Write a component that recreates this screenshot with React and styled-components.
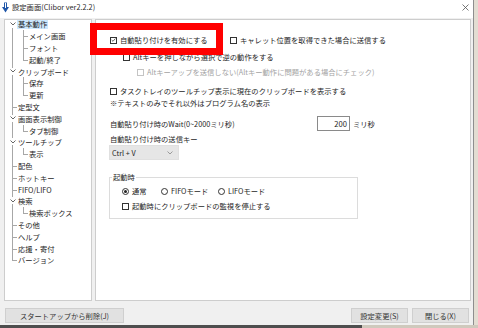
import styled, { createGlobalStyle } from "styled-components";

const GlobalStyle = createGlobalStyle`
  html, body {
    margin: 0;
    padding: 0;
    background: #e3ddd2;
  }
  body {
    font-family: "Noto Sans CJK JP", "Noto Sans", sans-serif;
    font-size: 7.3px;
    color: #1e1e1e;
  }
`;

const TREE = [
  { label: "基本動作", level: 0, expandable: true, selected: true, first: true },
  { label: "メイン画面", level: 1 },
  { label: "フォント", level: 1 },
  { label: "起動/終了", level: 1, lastChild: true },
  { label: "クリップボード", level: 0, expandable: true },
  { label: "保存", level: 1 },
  { label: "更新", level: 1, lastChild: true },
  { label: "定型文", level: 0 },
  { label: "画面表示制御", level: 0, expandable: true },
  { label: "タブ制御", level: 1, lastChild: true },
  { label: "ツールチップ", level: 0, expandable: true },
  { label: "表示", level: 1, lastChild: true },
  { label: "配色", level: 0 },
  { label: "ホットキー", level: 0 },
  { label: "FIFO/LIFO", level: 0 },
  { label: "検索", level: 0, expandable: true },
  { label: "検索ボックス", level: 1, lastChild: true },
  { label: "その他", level: 0 },
  { label: "ヘルプ", level: 0 },
  { label: "応援・寄付", level: 0 },
  { label: "バージョン", level: 0, last: true },
];

function CheckBox({ checked, disabled }) {
  return (
    <Box $disabled={disabled}>
      {checked && (
        <svg width="6" height="6" viewBox="0 0 6 6">
          <polyline points="0.8,3 2.4,4.6 5.3,1.2" fill="none" stroke="#333" strokeWidth="0.9" />
        </svg>
      )}
    </Box>
  );
}

function Check({ label, checked, disabled, width }) {
  return (
    <Item $width={width} $disabled={disabled}>
      <CheckBox checked={checked} disabled={disabled} />
      <span>{label}</span>
    </Item>
  );
}

function Radio({ label, checked, width }) {
  return (
    <Item $width={width}>
      <Circle>{checked && <Dot />}</Circle>
      <span>{label}</span>
    </Item>
  );
}

export default function App() {
  return (
    <>
      <GlobalStyle />
      <Page>
        <Top>
          <Window>
            <TitleBar>
              <svg width="7" height="11" viewBox="0 0 7 11">
                <rect x="2" y="0.5" width="3" height="5" fill="#1f56a8" />
                <polygon points="0,5 7,5 3.5,10.5" fill="#1f56a8" />
                <rect x="3" y="1" width="1" height="5" fill="#fff" />
              </svg>
              <Title>設定画面(Clibor ver2.2.2)</Title>
              <Close>
                <svg width="7" height="7" viewBox="0 0 7 7">
                  <path d="M0.5 0.5 L6.5 6.5 M6.5 0.5 L0.5 6.5" stroke="#555" strokeWidth="0.8" />
                </svg>
              </Close>
            </TitleBar>

            <Body>
              <TreePanel>
                <TreeList>
                  {TREE.map((n, i) => (
                    <TreeRow key={i}>
                      <RootGutter
                        $top={n.first}
                        $bottom={n.level === 0 && n.last}
                        $stub={n.level === 0 && !n.expandable}
                      >
                        {n.expandable && (
                          <Chevron>
                            <svg width="6" height="4" viewBox="0 0 6 4">
                              <polyline points="0.5,0.5 3,3 5.5,0.5" fill="none" stroke="#555" strokeWidth="0.9" />
                            </svg>
                          </Chevron>
                        )}
                      </RootGutter>
                      {n.level === 1 && <ChildGutter $last={n.lastChild} />}
                      <TreeLabel $selected={n.selected}>{n.label}</TreeLabel>
                    </TreeRow>
                  ))}
                </TreeList>
              </TreePanel>

              <ContentPanel>
                <Row $mt={14}>
                  <Check label="自動貼り付けを有効にする" checked width={120} />
                  <Check label="キャレット位置を取得できた場合に送信する" />
                </Row>
                <Row $mt={5} $indent={13}>
                  <Check label="Altキーを押しながら選択で逆の動作をする" />
                </Row>
                <Row $mt={3} $indent={27}>
                  <Check label="Altキーアップを送信しない(Altキー動作に問題がある場合にチェック)" disabled />
                </Row>
                <Row $mt={7}>
                  <Check label="タスクトレイのツールチップ表示に現在のクリップボードを表示する" />
                </Row>
                <Row>
                  <Text>※テキストのみでそれ以外はプログラム名の表示</Text>
                </Row>
                <Row $mt={7} $h={15}>
                  <Text $width={207}>自動貼り付け時のWait(0~2000ミリ秒)</Text>
                  <NumberBox>200</NumberBox>
                  <Unit>ミリ秒</Unit>
                </Row>
                <Row $mt={2}>
                  <Text>自動貼り付け時の送信キー</Text>
                </Row>
                <Combo>
                  <span>Ctrl + V</span>
                  <svg width="6" height="4" viewBox="0 0 6 4">
                    <polyline points="0.5,0.5 3,3 5.5,0.5" fill="none" stroke="#888" strokeWidth="0.8" />
                  </svg>
                </Combo>
                <Group>
                  <Legend>起動時</Legend>
                  <GroupRow>
                    <Radio label="通常" checked width={39} />
                    <Radio label="FIFOモード" width={57} />
                    <Radio label="LIFOモード" />
                  </GroupRow>
                  <GroupRow $mt={3}>
                    <Check label="起動時にクリップボードの監視を停止する" />
                  </GroupRow>
                </Group>
              </ContentPanel>
            </Body>

            <ButtonBar>
              <Button $width={119}>スタートアップから削除(J)</Button>
              <Spacer />
              <Button $width={57}>設定変更(S)</Button>
              <Button $width={57}>閉じる(X)</Button>
            </ButtonBar>

            <Highlight />
          </Window>
          <Desktop />
        </Top>
        <Taskbar />
      </Page>
    </>
  );
}

const Page = styled.div`
  width: 478px;
  height: 328px;
  display: flex;
  flex-direction: column;
  overflow: hidden;
`;

const Top = styled.div`
  display: flex;
  height: 325px;
`;

const Desktop = styled.div`
  flex: 1;
  background: #e3ddd2;
`;

const Taskbar = styled.div`
  height: 3px;
  background: linear-gradient(90deg, #4e4e4e 0, #4e4e4e 362px, #cfc9bd 362px);
`;

const Window = styled.div`
  position: relative;
  width: 474px;
  height: 325px;
  box-sizing: border-box;
  background: #f0f0f0;
  border-right: 1px solid #8e8e8e;
  display: flex;
  flex-direction: column;
`;

const TitleBar = styled.div`
  height: 18px;
  flex: none;
  background: #ffffff;
  display: flex;
  align-items: center;
  padding: 0 4px 4px 2px;
  box-sizing: border-box;
  gap: 3px;
`;

const Title = styled.span`
  color: #2a2a2a;
`;

const Close = styled.span`
  margin-left: auto;
  display: flex;
`;

const Body = styled.div`
  display: flex;
  gap: 3px;
  padding: 1px 2px 0 4px;
  height: 282px;
  flex: none;
`;

const TreePanel = styled.div`
  width: 88px;
  box-sizing: border-box;
  background: #ffffff;
  border: 1px solid #cdcdcd;
  overflow: hidden;
`;

const TreeList = styled.div`
  margin-top: -1.5px;
`;

const TreeRow = styled.div`
  display: flex;
  align-items: center;
  height: 11.8px;
`;

const RootGutter = styled.span`
  position: relative;
  flex: none;
  width: 12px;
  align-self: stretch;

  &::before {
    content: "";
    position: absolute;
    left: 7px;
    top: ${(p) => (p.$top ? "50%" : "0")};
    bottom: ${(p) => (p.$bottom ? "50%" : "0")};
    border-left: 1px solid #a7a7a7;
  }

  &::after {
    content: "";
    display: ${(p) => (p.$stub ? "block" : "none")};
    position: absolute;
    left: 7px;
    width: 5px;
    top: 50%;
    border-top: 1px solid #a7a7a7;
  }
`;

const Chevron = styled.span`
  position: absolute;
  left: 4px;
  top: 2px;
  width: 7px;
  height: 7px;
  background: #ffffff;
  display: flex;
  align-items: center;
  justify-content: center;
`;

const ChildGutter = styled.span`
  position: relative;
  flex: none;
  width: 11px;
  align-self: stretch;

  &::before {
    content: "";
    position: absolute;
    left: 6px;
    top: 0;
    bottom: ${(p) => (p.$last ? "50%" : "0")};
    border-left: 1px solid #a7a7a7;
  }

  &::after {
    content: "";
    position: absolute;
    left: 6px;
    width: 5px;
    top: 50%;
    border-top: 1px solid #a7a7a7;
  }
`;

const TreeLabel = styled.span`
  padding: 0 1px;
  height: 10px;
  line-height: 10px;
  white-space: nowrap;
  background: ${(p) => (p.$selected ? "#cce8ff" : "transparent")};
`;

const ContentPanel = styled.div`
  flex: 1;
  box-sizing: border-box;
  background: #ffffff;
  border: 1px solid #cdcdcd;
  padding-left: 14px;
  display: flex;
  flex-direction: column;
  align-items: flex-start;
`;

const Row = styled.div`
  display: flex;
  align-items: center;
  height: ${(p) => p.$h || 12}px;
  margin-top: ${(p) => p.$mt || 0}px;
  padding-left: ${(p) => p.$indent || 0}px;
  white-space: nowrap;
`;

const Item = styled.span`
  display: inline-flex;
  align-items: center;
  gap: 3px;
  width: ${(p) => (p.$width ? `${p.$width}px` : "auto")};
  color: ${(p) => (p.$disabled ? "#a3a3a3" : "#1e1e1e")};
  white-space: nowrap;
`;

const Box = styled.span`
  width: 7px;
  height: 7px;
  box-sizing: border-box;
  border: 1px solid ${(p) => (p.$disabled ? "#c4c4c4" : "#333333")};
  background: #ffffff;
  display: flex;
  align-items: center;
  justify-content: center;
  flex: none;
`;

const Circle = styled.span`
  width: 7px;
  height: 7px;
  box-sizing: border-box;
  border: 1px solid #333333;
  border-radius: 50%;
  display: flex;
  align-items: center;
  justify-content: center;
  flex: none;
`;

const Dot = styled.span`
  width: 3px;
  height: 3px;
  border-radius: 50%;
  background: #222222;
`;

const Text = styled.span`
  display: inline-block;
  width: ${(p) => (p.$width ? `${p.$width}px` : "auto")};
`;

const NumberBox = styled.span`
  width: 33px;
  height: 15px;
  box-sizing: border-box;
  border: 1px solid #8a8a8a;
  text-align: right;
  padding-right: 2px;
  line-height: 13px;
  font-size: 7.6px;
`;

const Unit = styled.span`
  margin-left: 3px;
`;

const Combo = styled.div`
  margin-left: -1px;
  width: 70px;
  height: 15px;
  box-sizing: border-box;
  background: #e6e6e6;
  border: 1px solid #e0e0e0;
  display: flex;
  align-items: center;
  justify-content: space-between;
  padding: 0 5px 0 2px;
`;

const Group = styled.fieldset`
  margin: 12px 0 0 -1px;
  width: 249px;
  box-sizing: border-box;
  border: 1px solid #dcdcdc;
  padding: 3px 0 6px 2px;
  min-inline-size: 0;
`;

const Legend = styled.legend`
  padding: 0 1px;
  line-height: 10px;
  font-size: 7.3px;
`;

const GroupRow = styled.div`
  display: flex;
  align-items: center;
  height: 12px;
  margin-left: 10px;
  margin-top: ${(p) => p.$mt || 0}px;
`;

const ButtonBar = styled.div`
  display: flex;
  gap: 4px;
  padding: 7px 4px 0 5px;
`;

const Spacer = styled.span`
  flex: 1;
`;

const Button = styled.div`
  width: ${(p) => p.$width}px;
  height: 15px;
  box-sizing: border-box;
  background: #e1e1e1;
  border: 1px solid #cfcfcf;
  display: flex;
  align-items: center;
  justify-content: center;
  color: #333333;
`;

const Highlight = styled.div`
  position: absolute;
  left: 90px;
  top: 23px;
  width: 133px;
  height: 32px;
  box-sizing: border-box;
  border: 7px solid #ff0000;
  pointer-events: none;
`;
